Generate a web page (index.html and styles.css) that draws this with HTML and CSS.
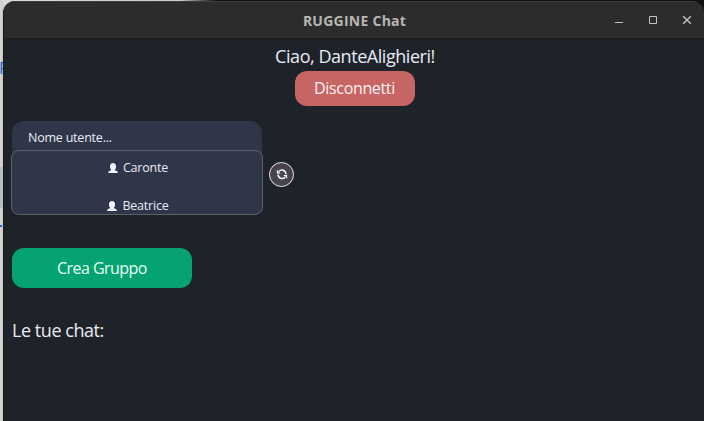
FILE: index.html
```html
<!DOCTYPE html>
<html lang="it">
<head>
<meta charset="utf-8">
<title>RUGGINE Chat</title>
<link rel="stylesheet" href="styles.css">
</head>
<body>
<div class="desktop">
  <div class="backdrop"></div>
  <span class="behind-letter">P</span>
  <span class="behind-patch"></span>
  <span class="behind-line"></span>
  <div class="window">
    <header class="titlebar">
      <h1 class="title"><span>RUGGINE Chat</span></h1>
      <svg class="controls" width="80" height="14" viewBox="0 0 80 14" fill="none" stroke="#c4c4c4">
        <path d="M1 9.5h8"/>
        <path d="M35.5 3.5h7v7h-7z"/>
        <path d="M69.2 3.2l7.6 7.6M76.8 3.2l-7.6 7.6" stroke-width="1.4"/>
      </svg>
    </header>
    <main class="content">
      <p class="greeting"><span>Ciao, DanteAlighieri!</span></p>
      <button class="disconnect"><span>Disconnetti</span></button>
      <section class="users">
        <div class="picker">
          <div class="search"><span>Nome utente...</span></div>
          <ul class="list">
            <li><svg class="person" width="10" height="11" viewBox="0 0 10 11"><path d="M5 0C3 0 2 1.500 2 3.500c0 1.500.5 2.600 1.200 3.300L2.700 7.500l-1.500.6Q.2 8.500.2 10h9.600q0-1.500-1-1.900l-1.500-.6-.5-.7C7.500 6.100 8 5 8 3.500 8 1.500 7 0 5 0z"/></svg><span>Caronte</span></li>
            <li><svg class="person" width="10" height="11" viewBox="0 0 10 11"><path d="M5 0C3 0 2 1.500 2 3.500c0 1.500.5 2.600 1.200 3.300L2.700 7.500l-1.500.6Q.2 8.500.2 10h9.600q0-1.500-1-1.900l-1.500-.6-.5-.7C7.500 6.100 8 5 8 3.500 8 1.500 7 0 5 0z"/></svg><span>Beatrice</span></li>
          </ul>
        </div>
        <button class="refresh" aria-label="Aggiorna">
          <svg width="12" height="12" viewBox="0 0 12 12">
            <g fill="none" stroke="#f4f2fa" stroke-width="1.500"><path d="M3 3.300C4.800 1.200 9.600 1.400 10 6.200"/><path d="M9 9.300C7.200 11.400 2.400 11.200 2 6.400"/></g>
            <path fill="#f4f2fa" d="M.8 1.800v3.700h3.900zM11.200 10.800V7.100H7.300z"/>
          </svg>
        </button>
      </section>
      <button class="create"><span>Crea Gruppo</span></button>
      <h2 class="chats"><span>Le tue chat:</span></h2>
    </main>
  </div>
</div>
</body>
</html>
```
FILE: styles.css
```css
* { box-sizing: border-box; }
body, h1, h2, p, ul { margin: 0; padding: 0; }
body { font-family: "Open Sans", "Noto Sans", sans-serif; color: #e9ebf5; overflow: hidden; }
button { border: 0; padding: 0; font: inherit; color: inherit; display: flex; align-items: center; justify-content: center; }
span { white-space: nowrap; }
.desktop { position: relative; width: 704px; height: 421px; padding: 1px 1px 1px 3px; overflow: hidden; background: linear-gradient(90deg, #d8d8d8, #c4c5c5 3px, #c4c5c5 50%, #1c1f22 50%); }
.backdrop { position: absolute; left: 0; top: 0; width: 704px; height: 22px; background: linear-gradient(90deg, #d8dadb 0, #cbcdce 180px, #444 206px, #111 217px); clip-path: polygon(3px 0, 100% 0, 100% 100%, 3px 100%); }
.behind-letter { position: absolute; left: -1px; top: 58px; font-size: 16px; line-height: 20px; color: #1764cf; }
.behind-patch { position: absolute; left: 0; top: 167px; width: 3px; height: 41px; background: #b8bdc1; }
.behind-line { position: absolute; left: 0; top: 225px; width: 2px; height: 2px; background: #2268c5; }
.window { position: relative; width: 701px; height: 420px; border-radius: 12px 12px 0 0; overflow: hidden; background: #1e232a; border-left: 1px solid #171b1e; }
.titlebar { display: grid; grid-template-columns: 1fr auto; align-items: center; height: 38px; background: #2c2c2c; border-top: 1px solid #3c3e3e; border-bottom: 1px solid #1a1d1d; padding-right: 10px; }
.title { grid-area: 1 / 1 / 2 / 3; text-align: center; font-size: 14px; line-height: 20px; font-weight: 700; letter-spacing: 0.25px; color: #b9b7b4; padding: 1px 0 0 11px; }
.controls { grid-area: 1 / 2; }
.content { display: flex; flex-direction: column; align-items: flex-start; padding: 5px 8px 0; }
.greeting { align-self: center; font-size: 18px; line-height: 24px; letter-spacing: -0.45px; padding-left: 2px; }
.disconnect { align-self: center; margin: 3px 0 0 1px; width: 120px; height: 35px; border-radius: 12px; background: #c76464; font-size: 16px; letter-spacing: -0.35px; color: #fff2f4; }
.disconnect, .create { padding-bottom: 1px; }
.users { display: flex; align-items: center; gap: 7px; margin-top: 15px; height: 94px; }
.picker { width: 252px; margin-left: -1px; }
.search { margin: 0 1px; height: 29px; border-radius: 12px 12px 0 0; background: #30364a; box-shadow: 0 10px 0 #30364a; padding: 8px 16px 0; font-size: 12.5px; line-height: 17px; letter-spacing: -0.22px; }
.list { position: relative; list-style: none; height: 65px; border: 1px solid #5f6068; border-radius: 8px; background: #30364a; padding: 8px 0 0 2px; display: flex; flex-direction: column; gap: 20px; font-size: 12.5px; line-height: 18px; letter-spacing: -0.2px; }
.list li { display: flex; justify-content: center; align-items: center; gap: 5px; }
.person { fill: #f2f4ff; }
.refresh { width: 25px; height: 25px; margin: 12px 0 0 -1px; border: 1.3px solid #e6e4ea; border-radius: 50%; background: #46434e; }
.create { width: 180px; height: 40px; margin-top: 33px; border-radius: 12px; background: #04a371; font-size: 16px; letter-spacing: -0.55px; color: #eafff8; }
.chats { margin-top: 30px; font-size: 18px; line-height: 24px; letter-spacing: -0.45px; font-weight: 400; }
```
